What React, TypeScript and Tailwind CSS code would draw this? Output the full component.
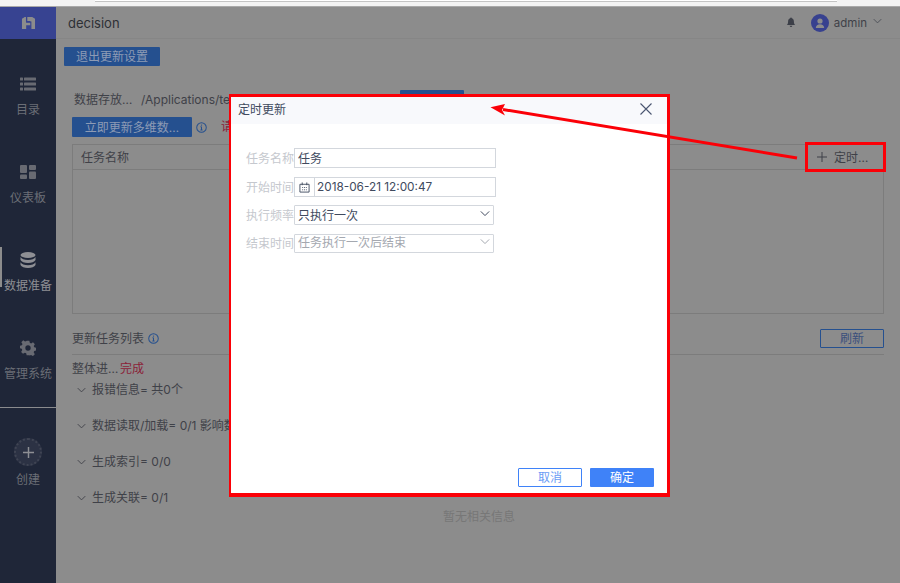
import React from "react";

const FONT = { fontFamily: '"Inter","Noto Sans CJK SC",sans-serif' };

function Chevron({ className = "" }: { className?: string }) {
  return (
    <svg viewBox="0 0 12 8" className={className} fill="none" stroke="currentColor" strokeWidth="1.2">
      <path d="M1 1.500l5 5 5-5" />
    </svg>
  );
}

function Info({ className = "" }: { className?: string }) {
  return (
    <svg viewBox="0 0 12 12" className={className} fill="none" stroke="currentColor" strokeWidth="1.100">
      <circle cx="6" cy="6" r="5.200" />
      <path d="M6 5.200v3.400M4.800 8.600h2.400M4.900 5.200H6" />
      <circle cx="6" cy="3.400" r=".7" fill="currentColor" stroke="none" />
    </svg>
  );
}

function SideItem({ icon, label, active }: { icon: React.ReactNode; label: string; active?: boolean }) {
  return (
    <div className="relative flex h-[88px] flex-col items-center justify-center gap-[9px] pb-[2px]">
      {active && <div className="absolute left-0 top-[18px] h-10 w-[2px] bg-[#8c8c8c]" />}
      <div className="flex h-[18px] items-center justify-center">{icon}</div>
      <div className={`text-xs leading-4 ${active ? "text-[#8e8f94]" : "text-[#6b6e76]"}`}>{label}</div>
    </div>
  );
}

function ListRow({ text }: { text: string }) {
  return (
    <div className="flex h-9 items-center gap-[6px] pl-[5px] text-xs whitespace-nowrap text-[#3f4148]">
      <Chevron className="h-[6px] w-[9px] text-[#3f4148]" />
      <span>{text}</span>
    </div>
  );
}

function FieldLabel({ children }: { children: React.ReactNode }) {
  return <div className="w-12 shrink-0 pt-[1px] text-xs whitespace-nowrap text-[#c5c8ce]">{children}</div>;
}

export default function App() {
  return (
    <div className="relative flex h-[583px] w-[900px] flex-col overflow-hidden bg-[#8c8c8c]" style={FONT}>
      {/* browser strip */}
      <div className="flex h-[7px] shrink-0 border-b border-[#a9a9a9] bg-[#f3f3f3] pl-[95px]">
        <div className="h-[2px] w-[742px] border-b border-[#c4c4c4] bg-white" />
      </div>

      <div className="flex min-h-0 flex-1">
        {/* sidebar */}
        <aside className="flex w-14 shrink-0 flex-col bg-[#1f2638]">
          <div className="flex h-8 items-center justify-center bg-[#374391]">
            <svg viewBox="0 0 16 15" className="h-[14px] w-[15px]">
              <path d="M1 3l3-2h8l3 2v11h-4.500v-4h-5v4H1z" fill="#8c8c8c" />
              <path d="M6 1v5h4" fill="none" stroke="#374391" strokeWidth="1.400" />
              <path d="M5.500 6.500h5V14" fill="none" stroke="#374391" strokeWidth="1.200" />
            </svg>
          </div>
          <div className="h-[14px]" />
          <SideItem
            label="目录"
            icon={
              <svg viewBox="0 0 16 14" className="h-[14px] w-4" fill="#686a72">
                <rect x="0" y="0.500" width="3" height="3" rx=".5" />
                <rect x="4" y="0.500" width="12" height="3" rx=".5" />
                <rect x="0" y="5.500" width="3" height="3" rx=".5" />
                <rect x="4" y="5.500" width="12" height="3" rx=".5" />
                <rect x="0" y="10.500" width="3" height="3" rx=".5" />
                <rect x="4" y="10.500" width="12" height="3" rx=".5" />
              </svg>
            }
          />
          <SideItem
            label="仪表板"
            icon={
              <svg viewBox="0 0 16 14" className="h-[14px] w-4" fill="#686a72">
                <rect x="0" y="0" width="7" height="8" rx="1" />
                <rect x="9" y="0" width="7" height="5" rx="1" />
                <rect x="0" y="9.500" width="7" height="4.500" rx="1" />
                <rect x="9" y="6.500" width="7" height="7.500" rx="1" />
              </svg>
            }
          />
          <SideItem
            active
            label="数据准备"
            icon={
              <svg viewBox="0 0 16 16" className="h-4 w-4" fill="#8e8f94">
                <ellipse cx="8" cy="3" rx="7.500" ry="3" />
                <path d="M.5 5c1 2 4 3 7.500 3s6.500-1 7.500-3v3c-1 2-4 3-7.500 3S1.500 10 .5 8z" />
                <path d="M.5 10.300c1 2 4 2.900 7.500 2.900s6.500-.9 7.500-2.900V13c-1 2-4 3-7.500 3S1.500 15 .5 13z" />
              </svg>
            }
          />
          <SideItem
            label="管理系统"
            icon={
              <svg viewBox="0 0 24 24" className="h-4 w-4" fill="#686a72">
                <path
                  fillRule="evenodd"
                  d="M10 1h4l.7 3.200 2 .9L19.500 3.300l2.800 2.900-1.700 2.800.8 2 3.100.8v4l-3.100.700-.9 2 1.700 2.800-2.800 2.800-2.800-1.700-2 .8L14 23h-4l-.7-3.100-2-.9-2.800 1.700-2.800-2.800L3.400 15l-.8-2L0 12.200V8.500L2.900 8l.8-2L2 3.300 4.800.5 7.600 2.200l2-.8zM12 8a4 4 0 100 8 4 4 0 000-8z"
                />
              </svg>
            }
          />
          <div className="mt-[2px] h-px bg-[#8a8b8e]" />
          <div className="flex flex-col items-center pt-[30px]">
            <div className="flex h-7 w-7 items-center justify-center rounded-full border-2 border-dotted border-[#3f4453] bg-[#2c3244]">
              <svg viewBox="0 0 12 12" className="h-[11px] w-[11px]" stroke="#8e8f94" strokeWidth="1.600">
                <path d="M6 0v12M0 6h12" />
              </svg>
            </div>
            <div className="mt-[6px] text-xs leading-4 text-[#6b6e76]">创建</div>
          </div>
        </aside>

        {/* main */}
        <main className="relative min-w-0 flex-1">
          <header className="flex h-8 items-center justify-between border-b border-[#868686] pl-3 pr-[18px]">
            <span className="pt-[2px] text-[13px] text-[#2e3035]">decision</span>
            <div className="flex items-center">
              <svg viewBox="0 0 12 12" className="mr-[15px] h-[11px] w-[10px]" fill="#3c3f48">
                <path d="M6 0c.7 0 1 .5 1 1 1.800.5 2.500 2 2.500 4 0 2 .6 3 1.500 4H1c.9-1 1.500-2 1.500-4 0-2 .7-3.500 2.500-4 0-.5.3-1 1-1zM4.500 10h3a1.500 1.500 0 01-3 0z" />
              </svg>
              <div className="flex h-[18px] w-[18px] items-center justify-center overflow-hidden rounded-full bg-[#37418f]">
                <svg viewBox="0 0 12 12" className="h-3 w-3" fill="#8c8c8c">
                  <circle cx="6" cy="4" r="2.600" />
                  <path d="M1.800 11c0-2.500 2-3.800 4.200-3.800s4.200 1.300 4.200 3.800z" />
                </svg>
              </div>
              <span className="ml-[5px] pt-[3px] text-[11.500px] text-[#3f4148]">admin</span>
              <Chevron className="mb-[3px] ml-[6px] h-[6px] w-[9px] text-[#4b4e56]" />
            </div>
          </header>

          <div className="px-2 pt-2">
            <button className="flex h-[19px] w-24 items-center justify-center rounded-[1px] bg-[#25508f] pt-[1px] text-xs text-[#8d9bb5]">
              退出更新设置
            </button>
          </div>

          <div className="pl-4 pr-4 pt-[24px]">
            <div className="relative flex h-5 items-center pl-[2px] text-xs whitespace-nowrap text-[#3f4148]">
              <span className="w-[60px]">数据存放…</span>
              <span className="ml-[7px] w-[88px] overflow-hidden">/Applications/te</span>
              <button className="absolute left-[328px] top-0 h-5 w-16 rounded-[1px] bg-[#25508f]" />
            </div>

            <div className="mt-[7px] flex h-5 items-center whitespace-nowrap">
              <button className="h-5 w-[120px] rounded-[1px] bg-[#25508f] pt-[1px] text-xs text-[#8d9bb5]">立即更新多维数…</button>
              <Info className="ml-[4px] h-[11px] w-[11px] text-[#25508f]" />
              <span className="ml-[14px] text-xs text-[#8b1e38]">请</span>
            </div>

            <div className="mt-[7px] h-[170px] border border-[#7c7c7c]">
              <div className="flex h-[25px] items-center justify-between border-b border-[#7c7c7c] pl-2 pr-[12px] text-xs text-[#3f4148]">
                <span className="pt-[1px]">任务名称</span>
                <span className="flex items-center gap-[7px]">
                  <svg viewBox="0 0 10 10" className="h-[10px] w-[10px]" stroke="#3f4148" strokeWidth="1">
                    <path d="M5 0v10M0 5h10" />
                  </svg>
                  <span className="w-[37px] pt-[1px]">定时…</span>
                </span>
              </div>
            </div>

            <div className="mt-[15px] flex h-[19px] items-center justify-between">
              <div className="flex items-center gap-[4px] text-xs text-[#3f4148]">
                <span>更新任务列表</span>
                <Info className="h-[11px] w-[11px] text-[#25508f]" />
              </div>
              <button className="h-[19px] w-16 rounded-[1px] border border-[#25508f] text-xs text-[#3a4f7c]">刷新</button>
            </div>
            <div className="mt-[6px] h-px bg-[#7c7c7c]" />

            <div className="mt-[6px] flex h-4 items-center text-xs text-[#3f4148]">
              <span className="w-12">整体进…</span>
              <span className="text-[#8b1e38]">完成</span>
            </div>
            <div className="mt-[-5px] flex flex-col">
              <ListRow text="报错信息= 共0个" />
              <ListRow text="数据读取/加载= 0/1 影响数" />
              <ListRow text="生成索引= 0/0" />
              <ListRow text="生成关联= 0/1" />
            </div>
            <div className="mt-[-7px] pl-[371px] text-xs leading-4 text-[#777]">暂无相关信息</div>
          </div>
        </main>
      </div>

      {/* modal */}
      <div className="absolute left-[229px] top-[94px] flex h-[403px] w-[441px] flex-col border-t-[3px] border-r-[3px] border-b-4 border-l-2 border-[#fb0007] bg-white">
        <div className="flex h-[27px] shrink-0 items-center justify-between bg-[#f8f9fc] pb-[2px] pl-[7px] pr-[15px]">
          <span className="text-xs text-[#404a5e]">定时更新</span>
          <svg viewBox="0 0 12 12" className="mb-[1px] h-3 w-3" fill="none" stroke="#4a5570" strokeWidth="1.100">
            <path d="M0.500 0.500l11 11M11.500 0.500l-11 11" />
          </svg>
        </div>
        <div className="flex flex-col pl-[15px] pt-[24px]">
          <div className="flex h-5 items-center">
            <FieldLabel>任务名称</FieldLabel>
            <div className="flex h-5 w-[202px] items-center border border-[#d3d7dd] pl-[3px] pt-[1px] text-xs text-[#404a5e]">任务</div>
          </div>
          <div className="mt-[9px] flex h-5 items-center">
            <FieldLabel>开始时间</FieldLabel>
            <div className="flex h-5 w-[202px] items-center border border-[#d3d7dd] text-xs text-[#404a5e]">
              <div className="flex h-full w-5 items-center justify-center border-r border-[#d3d7dd]">
                <svg viewBox="0 0 12 12" className="h-[11px] w-[11px]" fill="none" stroke="#404a5e" strokeWidth="1">
                  <path d="M1 2.500h10v8.500H1zM3.500 .500v3M8.500 .500v3" />
                  <path d="M3.500 6h1M5.500 6h1M7.500 6h1M3.500 8.500h1M5.500 8.500h1M7.500 8.500h1" />
                </svg>
              </div>
              <span className="pl-[2px] pt-[1px] text-[11.800px]">2018-06-21 12:00:47</span>
            </div>
          </div>
          <div className="mt-[8px] flex h-5 items-center">
            <FieldLabel>执行频率</FieldLabel>
            <div className="flex h-5 w-[200px] items-center justify-between rounded-[1px] border border-[#d3d7dd] pl-[3px] pr-[3px] text-xs text-[#404a5e]">
              <span className="pt-[1px]">只执行一次</span>
              <Chevron className="mb-[3px] h-[7px] w-[10px] text-[#404a5e]" />
            </div>
          </div>
          <div className="mt-[8px] flex h-5 items-center">
            <FieldLabel>结束时间</FieldLabel>
            <div className="flex h-[19px] w-[200px] items-center justify-between rounded-[1px] border border-[#d3d7dd] pl-[3px] pr-[3px] text-xs text-[#a4a8b0]">
              <span>任务执行一次后结束</span>
              <Chevron className="mb-[3px] h-[7px] w-[10px] text-[#a4a8b0]" />
            </div>
          </div>
        </div>
        <div className="mt-auto flex justify-end gap-2 pb-[6px] pr-[13px]">
          <button className="h-[19px] w-16 rounded-[1px] border border-[#3f82f8] bg-white pt-[1px] text-xs text-[#6a9cf5]">取消</button>
          <button className="h-[19px] w-16 rounded-[1px] bg-[#3f82f8] pt-[1px] text-xs text-white">确定</button>
        </div>
      </div>

      {/* annotation: box and arrow */}
      <div className="absolute left-[805px] top-[142px] h-[30px] w-[81px] border-[3px] border-[#fb0007]" />
      <svg viewBox="0 0 900 583" className="pointer-events-none absolute left-0 top-0 h-[583px] w-[900px]">
        <path d="M797 158L503 109.500" stroke="#fb0007" strokeWidth="3" fill="none" />
        <path d="M490.500 107.300L505 104L502 110L505 115.500Z" fill="#fb0007" />
      </svg>
    </div>
  );
}
